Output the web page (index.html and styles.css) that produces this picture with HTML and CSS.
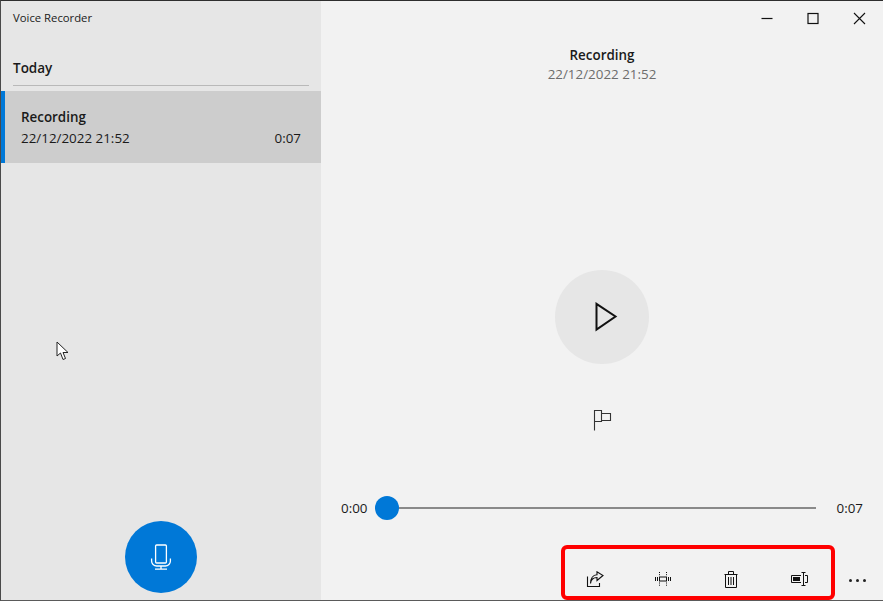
FILE: index.html
```html
<!DOCTYPE html>
<html lang="en">
<head>
<meta charset="utf-8">
<title>Voice Recorder</title>
<link rel="stylesheet" href="styles.css">
</head>
<body>
<div class="window">
  <aside class="sidebar">
    <div class="app-title">Voice Recorder</div>
    <div class="group-head">Today</div>
    <div class="rec-item">
      <div class="rec-name">Recording</div>
      <div class="rec-meta"><span>22/12/2022 21:52</span><span>0:07</span></div>
    </div>
    <div class="side-foot">
      <button class="mic-btn" aria-label="Record">
        <svg width="24" height="26" viewBox="0 0 24 26" fill="none" stroke="#fff" stroke-width="1.3">
          <rect x="6.600" y="1" width="10.800" height="18" rx="1"/>
          <path d="M2.600 14.500v2.500a5 5 0 0 0 5 5h8.800a5 5 0 0 0 5-5v-2.500M12 22v3M6 25.200h12"/>
        </svg>
      </button>
    </div>
  </aside>
  <main class="main">
    <div class="caption">
      <svg class="cap-icon" width="46" height="34" viewBox="0 0 46 34"><path d="M17.500 17.500h11" stroke="#111" stroke-width="1.200"/></svg>
      <svg class="cap-icon" width="46" height="34" viewBox="0 0 46 34"><rect x="18" y="12.500" width="10" height="10" fill="none" stroke="#111" stroke-width="1.200"/></svg>
      <svg class="cap-icon" width="46" height="34" viewBox="0 0 46 34"><path d="M18 12l11 11M29 12L18 23" stroke="#111" stroke-width="1.100"/></svg>
    </div>
    <div class="heading">
      <div class="heading-name">Recording</div>
      <div class="heading-date">22/12/2022 21:52</div>
    </div>
    <div class="play-circle">
      <svg width="24" height="30" viewBox="0 0 24 30" fill="none" stroke="#111" stroke-width="2"><path d="M2.500 1.800L21.500 14.500L2.500 27.500Z"/></svg>
    </div>
    <div class="flag-row">
      <svg width="20" height="22" viewBox="0 0 20 22" fill="none" stroke="#333" stroke-width="1.100"><path d="M2.500 21.500V1.500H9.500V12.500H2.500M9.500 4.500H18.500V11.500H9.500"/></svg>
    </div>
    <div class="slider-row">
      <span class="time">0:00</span>
      <div class="track"><span class="thumb"></span></div>
      <span class="time">0:07</span>
    </div>
    <div class="toolbar">
      <span class="tool"><svg width="18" height="16" viewBox="0 0 18 16" fill="none" stroke="#111" stroke-width="1.100"><path d="M1.500 5.500V15.500H13.500V12M4.500 12.500C5 8.500 8 6.500 11 6.500V9.500L17 4.500L11 .8V3.800C7 4 4.500 7.500 4.500 12.500Z"/></svg></span>
      <span class="tool"><svg width="18" height="14" viewBox="0 0 18 14" fill="none" stroke="#111" stroke-width="1"><rect x="5.500" y="5" width="7" height="4"/><path d="M1.500 5v4M3.500 5v4M14.500 5v4M16.500 5v4"/><path d="M5.500 0v3.500M12.500 0v3.500M5.500 10.500v3.500M12.500 10.500v3.500" stroke-dasharray="1 1.200"/></svg></span>
      <span class="tool"><svg width="14" height="17" viewBox="0 0 14 17" fill="none" stroke="#111" stroke-width="1"><path d="M.5 3.500h13M4.500 3.500V.5h5v3M1.500 3.500V16.500h11V3.500M4.500 6v8M7 6v8M9.500 6v8"/></svg></span>
      <span class="tool tool-shift"><svg width="18" height="14" viewBox="0 0 18 14" fill="none" stroke="#111"><path d="M10 3.500H.5V10.500H10M14 3.500H16.500V10.500H14M10.500 .5H14.500M10.500 13.500H14.500M12.500 .5V13.500"/><rect x="2" y="5" width="7" height="4" fill="#111" stroke="none"/></svg></span>
      <span class="more"><i></i><i></i><i></i></span>
    </div>
  </main>
  <svg class="cursor" width="14" height="20" viewBox="0 0 14 20"><path d="M1 1V15L4.500 12L7 18.500L9.500 17.500L7 11.500H12Z" fill="#fff" stroke="#222" stroke-width="1"/></svg>
  <div class="highlight"></div>
</div>
</body>
</html>
```
FILE: styles.css
```css
* { box-sizing: border-box; }
html, body { margin: 0; height: 100%; }
body { font-family: "Open Sans", "Noto Sans", sans-serif; color: #1a1a1a; }
.window {
  position: relative;
  width: 883px;
  height: 601px;
  display: flex;
  background: #f2f2f2;
  border-top: 1px solid #2e2e2e;
  border-left: 1px solid #4a4a4a;
  border-bottom: 1px solid #5a5a5a;
  overflow: hidden;
}
.sidebar {
  width: 320px;
  background: #e6e6e6;
  display: flex;
  flex-direction: column;
}
.app-title { font-size: 11.300px; line-height: 16px; margin: 9px 0 0 12px; }
.group-head {
  margin: 32px 12px 0 12px;
  height: 28px;
  line-height: 20px;
  font-size: 13.500px;
  font-weight: 600;
  border-bottom: 1px solid #b9b9b9;
}
.rec-item {
  margin-top: 5px;
  height: 72px;
  background: #cdcdcd;
  border-left: 4px solid #0078d7;
  padding: 15px 20px 0 16px;
  font-size: 13.400px;
}
.rec-name { font-weight: 600; line-height: 22px; }
.rec-meta { display: flex; justify-content: space-between; line-height: 20px; }
.side-foot { margin-top: auto; padding: 0 0 7px 124px; }
.mic-btn {
  display: flex;
  align-items: center;
  justify-content: center;
  width: 72px;
  height: 72px;
  padding: 0;
  border: 0;
  border-radius: 50%;
  background: #0078d7;
}
.main { flex: 1; display: flex; flex-direction: column; align-items: center; }
.caption { align-self: flex-end; display: flex; height: 34px; padding-right: 1px; }
.cap-icon { display: block; }
.heading { margin-top: 11px; text-align: center; font-size: 13.400px; line-height: 19px; }
.heading-name { font-weight: 600; }
.heading-date { color: #6d6d6d; }
.play-circle {
  margin-top: 186px;
  width: 94px;
  height: 94px;
  border-radius: 50%;
  background: #e6e6e6;
  display: flex;
  align-items: center;
  justify-content: center;
  padding-left: 8px;
}
.flag-row { margin-top: 45px; height: 22px; }
.flag-row svg { display: block; }
.slider-row {
  align-self: stretch;
  margin-top: 64px;
  height: 26px;
  padding: 0 20px 0 20px;
  display: flex;
  align-items: center;
  font-size: 13.400px;
}
.track {
  flex: 1;
  height: 2px;
  margin: 0 21px 0 7px;
  background: #8a8a8a;
  display: flex;
  align-items: center;
}
.thumb { width: 24px; height: 24px; border-radius: 50%; background: #0078d7; }
.toolbar {
  align-self: stretch;
  margin-top: 48px;
  height: 20px;
  display: flex;
  align-items: center;
  padding-left: 240px;
}
.tool { flex: none; width: 68px; display: flex; justify-content: center; }
.tool-shift { padding-left: 2px; }
.tool svg { display: block; }
.more { display: flex; justify-content: center; gap: 4px; width: 48px; padding-top: 3px; }
.more i { width: 3px; height: 3px; border-radius: 50%; background: #222; }
.cursor { position: absolute; left: 55px; top: 340px; }
.highlight {
  position: absolute;
  left: 560px;
  top: 544px;
  width: 274px;
  height: 55px;
  border: 4px solid #ff0000;
  border-radius: 6px;
}
```
